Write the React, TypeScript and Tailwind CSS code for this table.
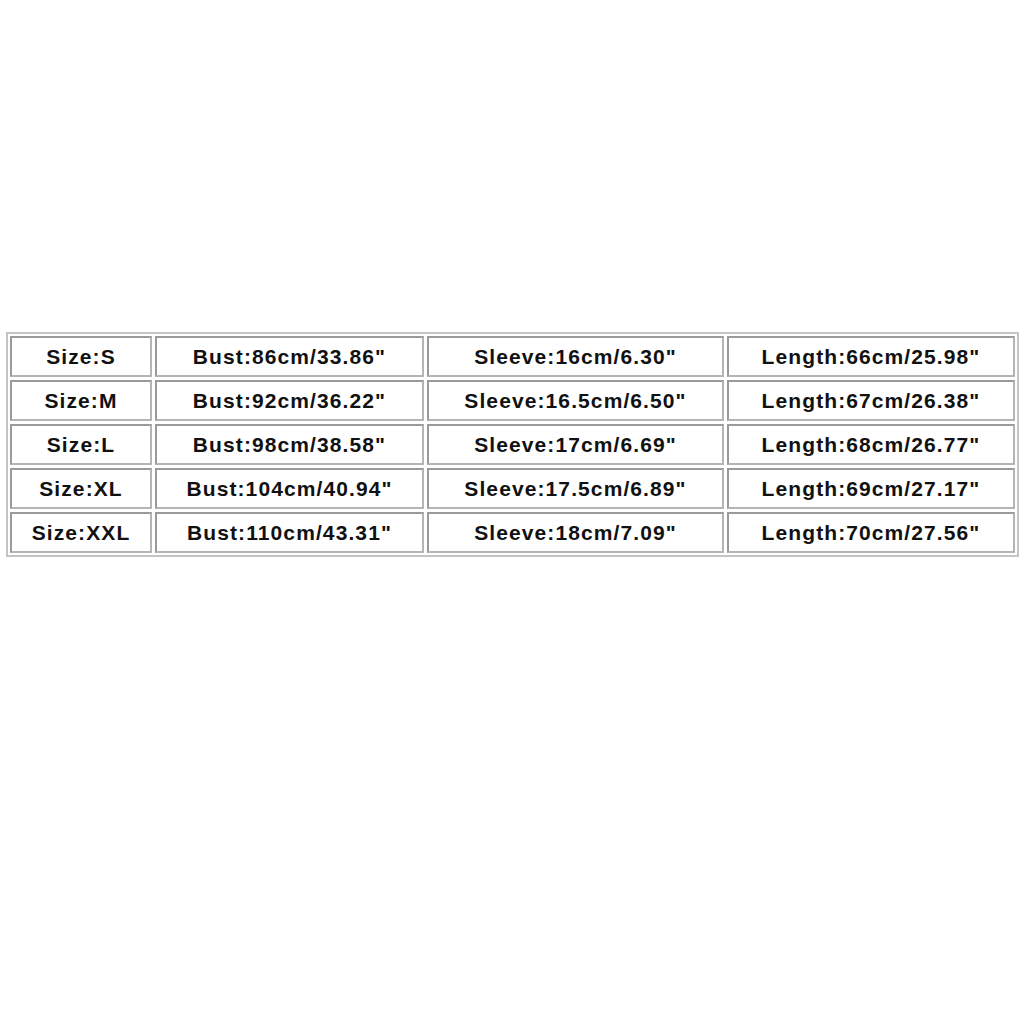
const rows = [
  ["Size:S", "Bust:86cm/33.86\"", "Sleeve:16cm/6.30\"", "Length:66cm/25.98\""],
  ["Size:M", "Bust:92cm/36.22\"", "Sleeve:16.5cm/6.50\"", "Length:67cm/26.38\""],
  ["Size:L", "Bust:98cm/38.58\"", "Sleeve:17cm/6.69\"", "Length:68cm/26.77\""],
  ["Size:XL", "Bust:104cm/40.94\"", "Sleeve:17.5cm/6.89\"", "Length:69cm/27.17\""],
  ["Size:XXL", "Bust:110cm/43.31\"", "Sleeve:18cm/7.09\"", "Length:70cm/27.56\""],
];

const App = () => {
  return (
    <div className="h-[1024px] w-[1024px] bg-white pt-[332px] pl-[6px]">
      <div className="w-fit border-2 border-[#c4c4c4] p-[2px]">
        <div className="grid grid-cols-[142px_269px_297px_288px] gap-[3px]">
          {rows.map((row, i) =>
            row.map((cell, j) => (
              <div
                key={`${i}-${j}`}
                className="flex h-[41px] items-center justify-center border-2 border-t-[#9a9a9a] border-l-[#9a9a9a] border-r-[#b4b4b4] border-b-[#b4b4b4] pt-px font-['Liberation_Sans',Arial,sans-serif] text-[21px] font-bold tracking-[1.1px] text-[#111]"
              >
                {cell}
              </div>
            ))
          )}
        </div>
      </div>
    </div>
  );
};

export default App;
